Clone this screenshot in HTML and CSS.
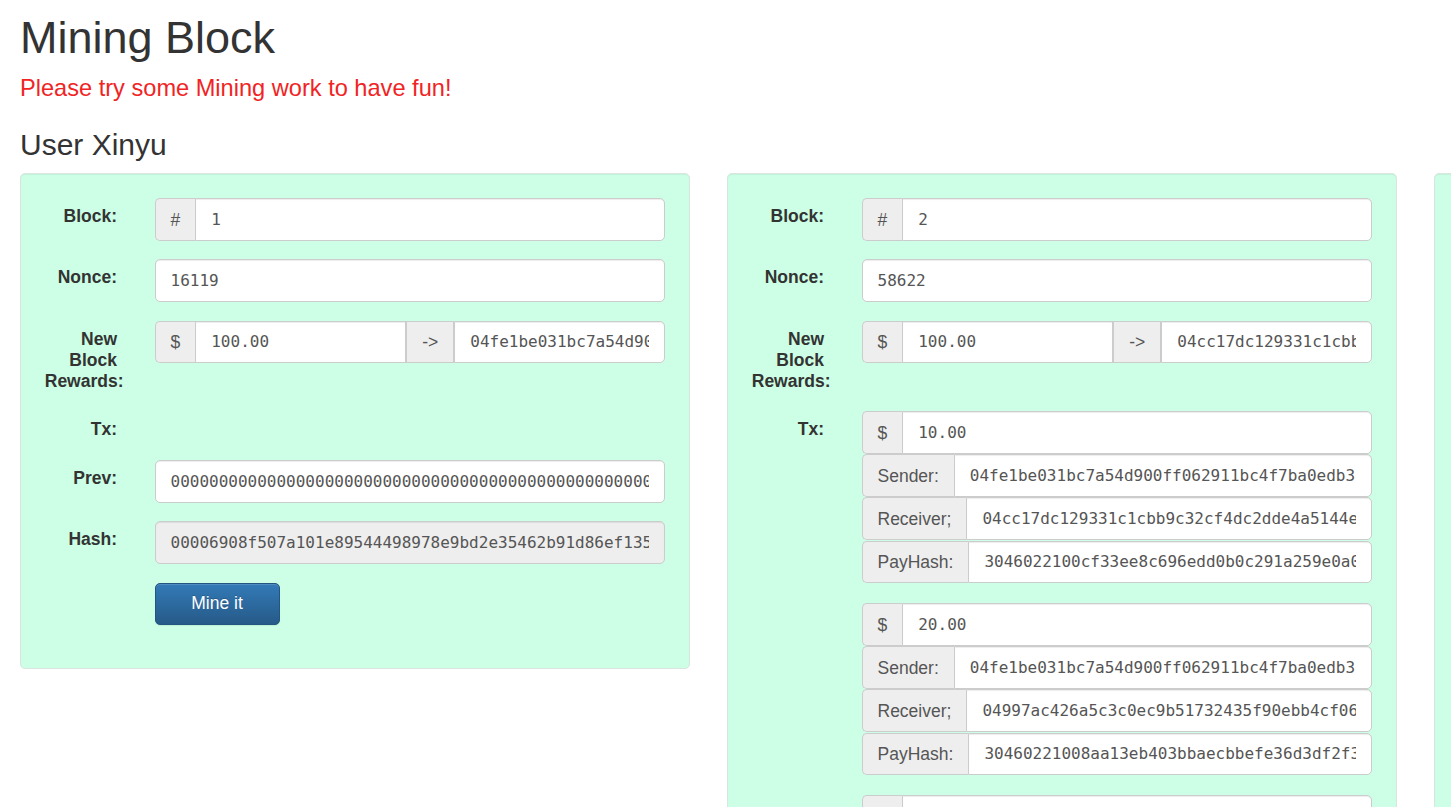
FILE: index.html
```html
<!DOCTYPE html>
<html lang="en">
<head>
<meta charset="utf-8">
<title>Mining Block</title>
<link rel="stylesheet" href="styles.css">
</head>
<body>
<div class="page">
  <h1 class="title">Mining Block</h1>
  <p class="subtitle">Please try some Mining work to have fun!</p>
  <h3 class="user">User Xinyu</h3>

  <div class="blocks">
    <!-- Block 1 -->
    <div class="well">
      <div class="form-group">
        <label class="control-label">Block:</label>
        <div class="input-group">
          <span class="addon">#</span>
          <input class="form-control" value="1">
        </div>
      </div>
      <div class="form-group">
        <label class="control-label">Nonce:</label>
        <div class="input-group">
          <input class="form-control" value="16119">
        </div>
      </div>
      <div class="form-group">
        <label class="control-label">New Block Rewards:</label>
        <div class="input-group">
          <span class="addon">$</span>
          <input class="form-control" value="100.00">
          <span class="addon mid">-&gt;</span>
          <input class="form-control" value="04fe1be031bc7a54d900ff062911bc4f7ba0edb3c1a7e5f9023b">
        </div>
      </div>
      <div class="form-group">
        <label class="control-label">Tx:</label>
        <div class="tx-list"></div>
      </div>
      <div class="form-group">
        <label class="control-label">Prev:</label>
        <div class="input-group">
          <input class="form-control" value="0000000000000000000000000000000000000000000000000000000000000000">
        </div>
      </div>
      <div class="form-group">
        <label class="control-label">Hash:</label>
        <div class="input-group">
          <input class="form-control" readonly value="00006908f507a101e89544498978e9bd2e35462b91d86ef135a7c3e21f04d8b6">
        </div>
      </div>
      <div class="form-group last">
        <span class="control-label"></span>
        <div><button class="btn-primary" type="button">Mine it</button></div>
      </div>
    </div>

    <!-- Block 2 -->
    <div class="well">
      <div class="form-group">
        <label class="control-label">Block:</label>
        <div class="input-group">
          <span class="addon">#</span>
          <input class="form-control" value="2">
        </div>
      </div>
      <div class="form-group">
        <label class="control-label">Nonce:</label>
        <div class="input-group">
          <input class="form-control" value="58622">
        </div>
      </div>
      <div class="form-group">
        <label class="control-label">New Block Rewards:</label>
        <div class="input-group">
          <span class="addon">$</span>
          <input class="form-control" value="100.00">
          <span class="addon mid">-&gt;</span>
          <input class="form-control" value="04cc17dc129331c1cbb9c32cf4dc2dde4a5144e0b7d2f1a9c3">
        </div>
      </div>
      <div class="form-group">
        <label class="control-label">Tx:</label>
        <div class="tx-list">
          <div class="tx">
            <div class="input-group">
              <span class="addon">$</span>
              <input class="form-control" value="10.00">
            </div>
            <div class="input-group">
              <span class="addon">Sender:</span>
              <input class="form-control" value="04fe1be031bc7a54d900ff062911bc4f7ba0edb3c1a7e5f9023b">
            </div>
            <div class="input-group">
              <span class="addon">Receiver;</span>
              <input class="form-control" value="04cc17dc129331c1cbb9c32cf4dc2dde4a5144e0b7d2f1a9c3">
            </div>
            <div class="input-group">
              <span class="addon">PayHash:</span>
              <input class="form-control" value="3046022100cf33ee8c696edd0b0c291a259e0a0d4b8e21f7c6">
            </div>
          </div>
          <div class="tx">
            <div class="input-group">
              <span class="addon">$</span>
              <input class="form-control" value="20.00">
            </div>
            <div class="input-group">
              <span class="addon">Sender:</span>
              <input class="form-control" value="04fe1be031bc7a54d900ff062911bc4f7ba0edb3c1a7e5f9023b">
            </div>
            <div class="input-group">
              <span class="addon">Receiver;</span>
              <input class="form-control" value="04997ac426a5c3c0ec9b51732435f90ebb4cf06a2d81e7b5c9">
            </div>
            <div class="input-group">
              <span class="addon">PayHash:</span>
              <input class="form-control" value="30460221008aa13eb403bbaecbbefe36d3df2f31c09e4a7b25">
            </div>
          </div>
          <div class="tx">
            <div class="input-group">
              <span class="addon">$</span>
              <input class="form-control" value="30.00">
            </div>
            <div class="input-group">
              <span class="addon">Sender:</span>
              <input class="form-control" value="04cc17dc129331c1cbb9c32cf4dc2dde4a5144e0b7d2f1a9c3">
            </div>
            <div class="input-group">
              <span class="addon">Receiver;</span>
              <input class="form-control" value="04997ac426a5c3c0ec9b51732435f90ebb4cf06a2d81e7b5c9">
            </div>
            <div class="input-group">
              <span class="addon">PayHash:</span>
              <input class="form-control" value="3045022100b71e5d9a0c2f3e48a6d91b7c05e2f8a3d4c61b">
            </div>
          </div>
        </div>
      </div>
      <div class="form-group">
        <label class="control-label">Prev:</label>
        <div class="input-group">
          <input class="form-control" value="00006908f507a101e89544498978e9bd2e35462b91d86ef135a7c3e21f04d8b6">
        </div>
      </div>
      <div class="form-group">
        <label class="control-label">Hash:</label>
        <div class="input-group">
          <input class="form-control" readonly value="0000b2e71c94d05a6f83e2c19b7d40a5e36f281c9d4b7a0e5f62c3d18a9b4e07">
        </div>
      </div>
      <div class="form-group last">
        <span class="control-label"></span>
        <div><button class="btn-primary" type="button">Mine it</button></div>
      </div>
    </div>

    <!-- Block 3 -->
    <div class="well">
      <div class="form-group">
        <label class="control-label">Block:</label>
        <div class="input-group">
          <span class="addon">#</span>
          <input class="form-control" value="3">
        </div>
      </div>
      <div class="form-group">
        <label class="control-label">Nonce:</label>
        <div class="input-group">
          <input class="form-control" value="0">
        </div>
      </div>
      <div class="form-group">
        <label class="control-label">New Block Rewards:</label>
        <div class="input-group">
          <span class="addon">$</span>
          <input class="form-control" value="100.00">
          <span class="addon mid">-&gt;</span>
          <input class="form-control" value="04997ac426a5c3c0ec9b51732435f90ebb4cf06a2d81e7b5c9">
        </div>
      </div>
      <div class="form-group">
        <label class="control-label">Tx:</label>
        <div class="tx-list">
          <div class="tx">
            <div class="input-group">
              <span class="addon">$</span>
              <input class="form-control" value="5.00">
            </div>
            <div class="input-group">
              <span class="addon">Sender:</span>
              <input class="form-control" value="04cc17dc129331c1cbb9c32cf4dc2dde4a5144e0b7d2f1a9c3">
            </div>
            <div class="input-group">
              <span class="addon">Receiver;</span>
              <input class="form-control" value="04fe1be031bc7a54d900ff062911bc4f7ba0edb3c1a7e5f9023b">
            </div>
            <div class="input-group">
              <span class="addon">PayHash:</span>
              <input class="form-control" value="3045022100d2a9e7c41b08f35e6a7c2d9b14e0f8a5c3b71d">
            </div>
          </div>
          <div class="tx">
            <div class="input-group">
              <span class="addon">$</span>
              <input class="form-control" value="15.00">
            </div>
            <div class="input-group">
              <span class="addon">Sender:</span>
              <input class="form-control" value="04997ac426a5c3c0ec9b51732435f90ebb4cf06a2d81e7b5c9">
            </div>
            <div class="input-group">
              <span class="addon">Receiver;</span>
              <input class="form-control" value="04cc17dc129331c1cbb9c32cf4dc2dde4a5144e0b7d2f1a9c3">
            </div>
            <div class="input-group">
              <span class="addon">PayHash:</span>
              <input class="form-control" value="3046022100a18b3f5e7d2c94a06b1e8f3d5c72a9e4b0d6f1">
            </div>
          </div>
        </div>
      </div>
      <div class="form-group">
        <label class="control-label">Prev:</label>
        <div class="input-group">
          <input class="form-control" value="0000b2e71c94d05a6f83e2c19b7d40a5e36f281c9d4b7a0e5f62c3d18a9b4e07">
        </div>
      </div>
      <div class="form-group">
        <label class="control-label">Hash:</label>
        <div class="input-group">
          <input class="form-control" readonly value="7c1e9a4f02b83d6e5a91c7f4e2d08b3a6c95f1e7d24a0b8c3e6f9152d7a4c0b8">
        </div>
      </div>
      <div class="form-group last">
        <span class="control-label"></span>
        <div><button class="btn-primary" type="button">Mine it</button></div>
      </div>
    </div>
  </div>
</div>
</body>
</html>
```

FILE: styles.css
```css
html, body {
  margin: 0;
  padding: 0;
  overflow: hidden;
  background: #fff;
}

body {
  font-family: "Liberation Sans", Arial, sans-serif;
  font-size: 17.5px;
  color: #333;
}

.page {
  padding: 0 0 0 20px;
}

.title {
  margin: 13px 0 0;
  font-size: 45px;
  font-weight: 400;
  line-height: 49.5px;
  color: #333;
}

.subtitle {
  margin: 12.6px 0 0;
  font-size: 23.6px;
  line-height: 26px;
  color: #f02424;
}

.user {
  margin: 26.6px 0 0;
  font-size: 30px;
  font-weight: 400;
  line-height: 33px;
  color: #333;
}

.blocks {
  display: flex;
  align-items: flex-start;
  gap: 37px;
  margin-top: 12.6px;
}

.well {
  flex: 0 0 670px;
  box-sizing: border-box;
  width: 670px;
  padding: 23.75px;
  background: #ccffe5;
  border: 1px solid #d9e6df;
  border-radius: 5px;
  box-shadow: inset 0 1px 1px rgba(0, 0, 0, .05);
}

.form-group {
  display: grid;
  grid-template-columns: 72.25px 1fr;
  column-gap: 37.5px;
  margin-bottom: 18.75px;
  align-items: start;
}

.control-label {
  display: block;
  padding: 8px 0 1px;
  font-weight: 700;
  line-height: 21px;
  text-align: right;
  color: #333;
}

.input-group {
  display: flex;
  height: 42.5px;
  min-width: 0;
}

.tx {
  margin-bottom: 20.2px;
}

.tx .input-group {
  margin-bottom: 0.6px;
}

.addon {
  flex: 0 0 auto;
  box-sizing: border-box;
  height: 42.5px;
  padding: 7.5px 15px;
  font-size: 17.5px;
  line-height: 26px;
  color: #555;
  text-align: center;
  background: #eee;
  border: 1px solid #ccc;
  border-right: 0;
  border-radius: 5px 0 0 5px;
}

.addon.mid {
  border-right: 1px solid #ccc;
  border-left: 1px solid #ccc;
  border-radius: 0;
}

.form-control {
  flex: 1 1 0;
  min-width: 0;
  box-sizing: border-box;
  height: 42.5px;
  margin: 0;
  padding: 7.5px 15px;
  font-family: "DejaVu Sans Mono", "Liberation Mono", monospace;
  font-size: 16px;
  color: #555;
  background: #fff;
  border: 1px solid #ccc;
  border-radius: 5px;
  box-shadow: inset 0 1px 1px rgba(0, 0, 0, .075);
  outline: none;
}

.form-control[readonly] {
  background: #eee;
}

.addon + .form-control {
  border-radius: 0 5px 5px 0;
}

.addon + .form-control:not(:last-child) {
  border-radius: 0;
}

.mid + .form-control {
  border-radius: 0 5px 5px 0;
}

.btn-primary {
  box-sizing: border-box;
  width: 125px;
  height: 42.5px;
  padding: 7.5px 15px;
  font-family: "Liberation Sans", Arial, sans-serif;
  font-size: 17.5px;
  line-height: 25px;
  color: #fff;
  text-shadow: 0 -1px 0 rgba(0, 0, 0, .2);
  background-color: #265a88;
  background-image: linear-gradient(to bottom, #337ab7 0%, #265a88 100%);
  border: 1px solid #245580;
  border-radius: 5px;
  box-shadow: inset 0 1px 0 rgba(255, 255, 255, .15), 0 1px 1px rgba(0, 0, 0, .075);
  cursor: pointer;
}
```
